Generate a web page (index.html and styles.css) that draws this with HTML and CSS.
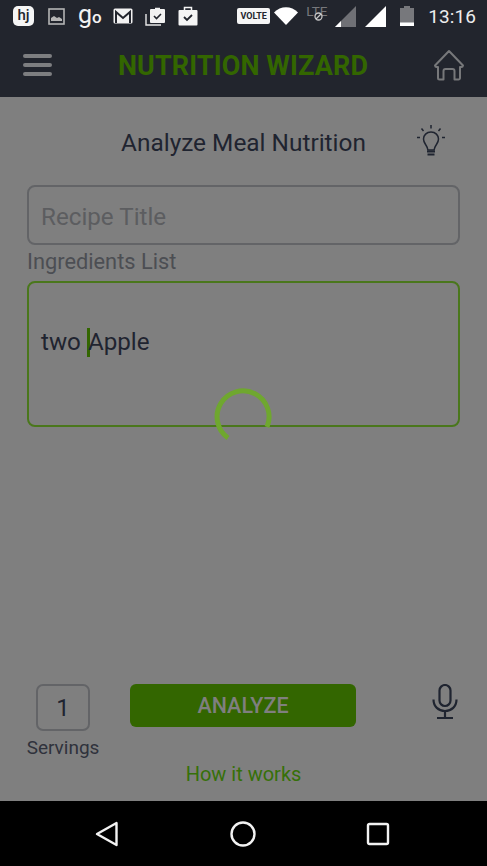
FILE: index.html
```html
<!DOCTYPE html>
<html lang="en">
<head>
    <meta charset="UTF-8">
    <meta name="viewport" content="width=device-width, initial-scale=1.0">
    <title>Nutrition Wizard</title>
    <link rel="stylesheet" href="styles.css">
</head>
<body>
    <div class="phone">
        <div class="status-bar">
            <div class="status-left">
                <span class="hi-logo">hj</span>
                <svg class="gallery" width="17" height="17" viewBox="0 0 17 17"><rect x="1" y="1" width="15" height="15" fill="none" stroke="#b5b5b5" stroke-width="1.6"/><path d="M3 13V10l3-2 3 2 2-1 3 2v2z" fill="#b5b5b5"/></svg>
                <span class="go-logo"><span class="go-g">g</span><span class="go-o">o</span></span>
                <svg width="20" height="16" viewBox="0 0 20 16"><rect x="0.500" y="0.500" width="19" height="15" rx="1.500" fill="#f2f2f2"/><path d="M3 15V4l7 6 7-6v11" fill="none" stroke="#22252d" stroke-width="2"/></svg>
                <svg width="21" height="21" viewBox="0 0 21 21"><path d="M1 8v11h15" fill="none" stroke="#e8e8e8" stroke-width="1.400"/><rect x="5" y="3" width="15" height="14" rx="1" fill="#f2f2f2"/><path d="M10 2.500h5" stroke="#f2f2f2" stroke-width="1.500" fill="none"/><path d="M9 10l2.500 2.500 4.500-4.500" fill="none" stroke="#22252d" stroke-width="1.600"/></svg>
                <svg width="20" height="21" viewBox="0 0 20 21"><rect x="0.500" y="4" width="19" height="15.500" rx="1" fill="#f5f5f5"/><path d="M6.500 4V1.500h7V4" fill="none" stroke="#f5f5f5" stroke-width="1.500"/><path d="M6 11l3 3 5-5" fill="none" stroke="#22252d" stroke-width="1.800"/></svg>
            </div>
            <div class="status-right">
                <span class="volte">VOLTE</span>
                <svg class="wifi" width="24" height="18" viewBox="0 0 24 18"><path d="M0 5.500C6.500-1.500 17.500-1.500 24 5.500L12 18z" fill="#fff"/></svg>
                <span class="lte">LTE<svg class="lte-off" width="9" height="9" viewBox="0 0 9 9"><circle cx="4.500" cy="4.500" r="3.500" fill="#22252d" stroke="#c8c8c8" stroke-width="1.300"/><path d="M2 7l5-5" stroke="#c8c8c8" stroke-width="1.200"/></svg></span>
                <svg class="signal-dim" width="21" height="21" viewBox="0 0 21 21"><path d="M0 21L21 0v21z" fill="#6f7075"/><path d="M0 21l6-6v6z" fill="#fff"/></svg>
                <svg class="signal" width="21" height="21" viewBox="0 0 21 21"><path d="M0 21L21 0v21z" fill="#fff"/></svg>
                <svg class="battery" width="14" height="20" viewBox="0 0 14 20"><path d="M4 0h6v2h4v18H0V2h4z" fill="#77787c"/><rect y="16.500" width="14" height="3.500" fill="#fff"/></svg>
                <span class="clock">13:16</span>
            </div>
        </div>
        <header class="app-bar">
            <div class="menu-icon"><span></span><span></span><span></span></div>
            <h1 class="brand">NUTRITION WIZARD</h1>
            <svg class="home-icon" width="34" height="32" viewBox="0 0 34 32"><path d="M3 16.500L17 2l14 14.500a1.800 1.800 0 0 1-2 1.500h-1v11a1.500 1.500 0 0 1-1.500 1.500H22.500V22a2 2 0 0 0-2-2h-7a2 2 0 0 0-2 2v8.500H7.500A1.500 1.500 0 0 1 6 29V18H5a1.800 1.800 0 0 1-2-1.500z" fill="none" stroke="#77787a" stroke-width="2" stroke-linejoin="round"/></svg>
        </header>
        <main class="content">
            <div class="title-row">
                <h2 class="page-title">Analyze Meal Nutrition</h2>
                <svg class="bulb" width="30" height="34" viewBox="0 0 30 34"><path d="M15 8c-4.500 0-7.500 3.300-7.500 7 0 2.600 1.300 4.200 2.400 6 .9 1.400 1.700 3 2 5h6.200c.3-2 1.100-3.600 2-5 1.100-1.800 2.400-3.400 2.400-6 0-3.700-3-7-7.500-7z" fill="none" stroke="#1f2430" stroke-width="1.500"/><path d="M11 27.500h8M11.500 30.500h7" stroke="#1f2430" stroke-width="1.800"/><path d="M15 1v3.500M5.500 4.500l2 2.500M24.500 4.500l-2 2.500M1 13.500h3M26 13.500h3" stroke="#1f2430" stroke-width="1.500"/></svg>
            </div>
            <div class="field recipe-field">Recipe Title</div>
            <label class="field-label">Ingredients List</label>
            <div class="field ingredients-field">two <span class="caret"></span>Apple</div>
            <div class="actions">
                <div class="servings">
                    <div class="servings-box">1</div>
                    <div class="servings-label">Servings</div>
                </div>
                <button class="analyze-btn">ANALYZE</button>
                <svg class="mic" width="26" height="35" viewBox="0 0 26 35"><rect x="7.500" y="1" width="11" height="21" rx="5.500" fill="none" stroke="#1f2430" stroke-width="2.200"/><path d="M1.500 15.500c0 7 5 11.500 11.500 11.500s11.500-4.500 11.500-11.500M13 27v6.500M5 34h16" fill="none" stroke="#1f2430" stroke-width="2.200"/></svg>
            </div>
            <a class="how-link">How it works</a>
            <svg class="spinner" width="58" height="58" viewBox="0 0 58 58"><path d="M14 51A26 26 0 1 1 53 40" fill="none" stroke="#6fa72f" stroke-width="5"/></svg>
        </main>
        <nav class="nav-bar">
            <svg class="nav-back" width="24" height="26" viewBox="0 0 24 26"><path d="M21.500 2v22L2 13z" fill="none" stroke="#f2f2f2" stroke-width="2.400" stroke-linejoin="round"/></svg>
            <svg width="26" height="26" viewBox="0 0 26 26"><circle cx="13" cy="13" r="11.500" fill="none" stroke="#f2f2f2" stroke-width="2.400"/></svg>
            <svg class="nav-recent" width="24" height="24" viewBox="0 0 24 24"><rect x="2" y="2" width="20" height="20" rx="1.500" fill="none" stroke="#f2f2f2" stroke-width="2.400"/></svg>
        </nav>
    </div>
</body>
</html>
```

FILE: styles.css
```css
* {
    box-sizing: border-box;
}

body {
    margin: 0;
    padding: 0;
    font-family: Roboto, "Liberation Sans", sans-serif;
}

.phone {
    display: flex;
    flex-direction: column;
    width: 487px;
    height: 866px;
    overflow: hidden;
    background: #7f7f7f;
}

.status-bar {
    display: flex;
    justify-content: space-between;
    align-items: center;
    height: 32px;
    padding: 0 11px 0 13px;
    background: #22252d;
}

.status-left,
.status-right {
    display: flex;
    align-items: center;
}

.status-left {
    gap: 12px;
}

.hi-logo {
    width: 21px;
    height: 20px;
    border-radius: 5px;
    background: #f5f5f5;
    color: #22252d;
    font-size: 15px;
    font-weight: 500;
    line-height: 19px;
    text-align: center;
}

.gallery {
    margin-left: 2px;
}

.go-logo {
    display: flex;
    align-items: baseline;
    width: 23px;
    margin-left: 1px;
    color: #f2f2f2;
    line-height: 26px;
}

.go-g {
    font-size: 25px;
}

.go-o {
    font-size: 17px;
    font-weight: 500;
}

.volte {
    width: 33px;
    height: 16px;
    border-radius: 2px;
    background: #f5f5f5;
    color: #22252d;
    font-size: 9px;
    font-weight: 700;
    line-height: 16px;
    text-align: center;
}

.wifi {
    margin-left: 4px;
}

.lte {
    position: relative;
    width: 24px;
    margin-left: 8px;
    margin-top: -10px;
    color: #77787c;
    font-size: 13.5px;
    line-height: 13px;
}

.lte-off {
    position: absolute;
    left: 8px;
    top: 7px;
}

.signal-dim {
    margin-left: 5px;
}

.signal {
    margin-left: 9px;
}

.battery {
    margin-left: 14px;
}

.clock {
    margin-left: 14px;
    color: #ededed;
    font-size: 19px;
    letter-spacing: 0.1px;
}

.app-bar {
    position: relative;
    display: flex;
    justify-content: space-between;
    align-items: center;
    height: 65px;
    padding: 0 21px 0 23px;
    background: #22252d;
}

.menu-icon {
    display: flex;
    flex-direction: column;
    gap: 5px;
}

.menu-icon span {
    display: block;
    width: 29px;
    height: 4px;
    border-radius: 2px;
    background: #7d7e80;
}

.brand {
    margin: 2px 0 0 2px;
    color: #336600;
    font-size: 27px;
    font-weight: 700;
    letter-spacing: 0.1px;
}

.content {
    position: relative;
    display: flex;
    flex: 1;
    flex-direction: column;
    padding: 0 27px;
}

.title-row {
    position: relative;
    display: flex;
    justify-content: center;
    align-items: center;
    height: 88px;
    padding-top: 2px;
}

.page-title {
    margin: 0;
    color: #1f2430;
    font-size: 24.4px;
    font-weight: 400;
}

.bulb {
    position: absolute;
    right: 14px;
    top: 27px;
}

.field {
    border-radius: 8px;
    font-size: 24.2px;
}

.recipe-field {
    height: 60px;
    padding: 2px 12px 0;
    border: 2px solid #636467;
    color: #5c5d60;
    line-height: 57px;
}

.field-label {
    display: block;
    height: 36px;
    padding-top: 1px;
    color: #4c4e53;
    font-size: 21.8px;
    line-height: 32px;
}

.ingredients-field {
    height: 146px;
    padding: 44px 12px 0;
    border: 2px solid #4a771c;
    color: #1f2430;
    line-height: 30px;
}

.caret {
    display: inline-block;
    width: 3px;
    height: 29px;
    margin-right: -2px;
    background: #336600;
    vertical-align: -7px;
}

.actions {
    display: flex;
    align-items: flex-start;
    margin-top: auto;
    position: relative;
}

.servings {
    display: flex;
    flex-direction: column;
    align-items: center;
    width: 72px;
}

.servings-box {
    width: 54px;
    height: 47px;
    border: 2px solid #636467;
    border-radius: 7px;
    color: #1f2430;
    font-size: 24px;
    line-height: 44px;
    text-align: center;
}

.servings-label {
    margin-top: 5px;
    color: #2f323c;
    font-size: 19px;
    line-height: 24px;
}

.analyze-btn {
    width: 226px;
    height: 43px;
    margin-left: 31px;
    padding: 0;
    border: 0;
    border-radius: 6px;
    background: #336600;
    color: #7f7f7f;
    font-family: inherit;
    font-size: 21.5px;
    font-weight: 500;
}

.mic {
    margin-left: 76px;
}

.how-link {
    display: block;
    height: 41px;
    color: #367008;
    font-size: 20px;
    line-height: 28px;
    text-align: center;
}

.spinner {
    position: absolute;
    left: 214px;
    top: 290px;
}

.nav-bar {
    display: flex;
    justify-content: center;
    align-items: center;
    gap: 109px;
    height: 65px;
    background: #000;
}

.nav-back {
    margin-left: -3px;
    margin-right: 2px;
}

.nav-recent {
    margin-left: 1px;
}
```
